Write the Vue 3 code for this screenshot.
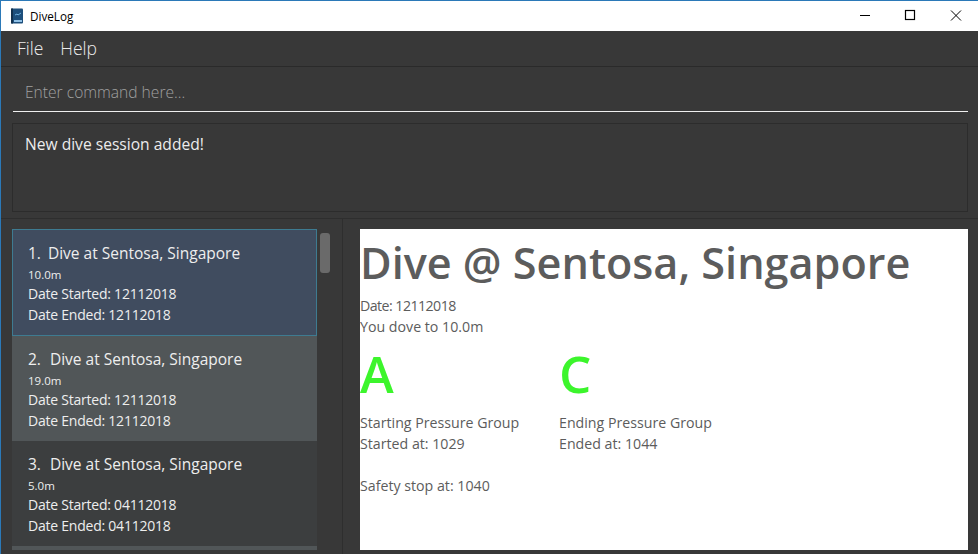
<template>
  <div class="window">
    <header class="titlebar">
      <svg class="app-icon" width="14" height="16" viewBox="0 0 14 16">
        <rect x="1" y="0.5" width="12" height="15" rx="1" fill="#1d4f7c" />
        <rect x="1" y="0.5" width="2" height="15" fill="#12304d" />
        <path d="M5 7l2-1 1 1 3-2" stroke="#6fb0e0" fill="none" />
        <rect x="4" y="12" width="8" height="2" fill="#8fc0e6" />
      </svg>
      <span class="app-title">DiveLog</span>
      <div class="win-controls">
        <svg width="46" height="30" viewBox="0 0 46 30"><path d="M20 14.5h10" stroke="#000" /></svg>
        <svg width="46" height="30" viewBox="0 0 46 30"><rect x="19.5" y="9.5" width="9" height="9" fill="none" stroke="#000" stroke-width="1.2" /></svg>
        <svg width="46" height="30" viewBox="0 0 46 30"><path d="M19 9.5l10 10M29 9.5l-10 10" stroke="#000" /></svg>
      </div>
    </header>

    <nav class="menubar">
      <span>File</span>
      <span>Help</span>
    </nav>

    <div class="command">
      <div class="command-input">Enter command here...</div>
    </div>

    <div class="result-wrap">
      <div class="result">New dive session added!</div>
    </div>

    <main class="split">
      <section class="list-pane">
        <div class="list">
          <article
            v-for="(dive, i) in dives"
            :key="i"
            class="card"
            :class="{ selected: i === 0, alt: i === 1 }"
          >
            <div class="card-title"><span class="card-num">{{ i + 1 }}.</span>Dive at {{ dive.place }}</div>
            <div class="card-depth">{{ dive.depth }}</div>
            <div class="card-line">Date Started: {{ dive.date }}</div>
            <div class="card-line">Date Ended: {{ dive.date }}</div>
          </article>
          <div class="card-next"></div>
        </div>
        <div class="scrollbar"><div class="thumb"></div></div>
      </section>

      <section class="detail-pane">
        <div class="detail">
          <h1>Dive @ Sentosa, Singapore</h1>
          <p class="date">Date: 12112018</p>
          <p>You dove to 10.0m</p>
          <div class="groups">
            <div class="group">
              <div class="letter">A</div>
              <p>Starting Pressure Group</p>
              <p>Started at: 1029</p>
            </div>
            <div class="group">
              <div class="letter">C</div>
              <p>Ending Pressure Group</p>
              <p>Ended at: 1044</p>
            </div>
          </div>
          <p class="safety">Safety stop at: 1040</p>
        </div>
      </section>
    </main>
  </div>
</template>

<script setup>
const dives = [
  { place: 'Sentosa, Singapore', depth: '10.0m', date: '12112018' },
  { place: 'Sentosa, Singapore', depth: '19.0m', date: '12112018' },
  { place: 'Sentosa, Singapore', depth: '5.0m', date: '04112018' }
];
</script>

<style>
html, body {
  margin: 0;
  overflow: hidden;
}
</style>

<style scoped>
.window {
  width: 978px;
  height: 554px;
  box-sizing: border-box;
  border-top: 1px solid #2b79b8;
  border-left: 1px solid #2b79b8;
  display: flex;
  flex-direction: column;
  background: #383838;
  font-family: "Open Sans", "Noto Sans", sans-serif;
  overflow: hidden;
}

.titlebar {
  height: 30px;
  flex: none;
  box-sizing: border-box;
  display: flex;
  align-items: center;
  padding-left: 9px;
  background: #fff;
}

.app-title {
  margin-left: 6px;
  margin-top: -1px;
  font-size: 11.7px;
  color: #000;
}

.win-controls {
  margin-left: auto;
  display: flex;
}

.win-controls svg {
  display: block;
}

.menubar {
  height: 36px;
  flex: none;
  box-sizing: border-box;
  display: flex;
  align-items: center;
  gap: 17px;
  padding: 0 0 2px 16px;
  font-size: 17.5px;
  font-weight: 300;
  color: #ececec;
  border-bottom: 1px solid #2a2a2a;
}

.command {
  height: 51px;
  flex: none;
  box-sizing: border-box;
  padding: 0 10px 0 12px;
}

.command-input {
  height: 45px;
  box-sizing: border-box;
  padding: 15px 0 0 12px;
  font-size: 15.6px;
  font-weight: 300;
  line-height: 20px;
  color: #a0a0a0;
  border-bottom: 1px solid #f0f0f0;
}

.result-wrap {
  height: 101px;
  flex: none;
  box-sizing: border-box;
  padding: 5px 10px 6px 11px;
  border-bottom: 1px solid #2e2e2e;
}

.result {
  height: 89px;
  box-sizing: border-box;
  padding: 10px 12px;
  border: 1px solid #2c2c2c;
  font-size: 15.6px;
  line-height: 20px;
  color: #ececec;
}

.split {
  flex: 1;
  min-height: 0;
  display: flex;
}

.list-pane {
  width: 342px;
  flex: none;
  box-sizing: border-box;
  display: flex;
  padding: 10px 0 0 11px;
  border-right: 1px solid #2e2e2e;
}

.list {
  width: 305px;
  flex: none;
}

.card {
  height: 105px;
  box-sizing: border-box;
  padding: 13px 16px 0;
  background: #3c3e3f;
  color: #eee;
  font-size: 14px;
  line-height: 20.5px;
  letter-spacing: -0.23px;
}

.card.selected {
  height: 107px;
  background: #404c5f;
  border: 1px solid #3e7b91;
  padding: 13px 15px 0;
}

.card.alt {
  background: #515658;
}

.card-next {
  height: 4px;
  background: #515658;
}

.card-title {
  font-size: 15.5px;
  line-height: 21px;
  letter-spacing: 0;
}

.card-num {
  margin-right: 9px;
}

.selected .card-num {
  margin-right: 7px;
}

.card-depth {
  font-size: 11.5px;
  line-height: 19px;
  margin-top: 1px;
  letter-spacing: 0;
}

.scrollbar {
  width: 10px;
  margin-left: 3px;
  padding-top: 4px;
}

.thumb {
  height: 40px;
  border-radius: 3px;
  background: #6a6a6a;
}

.detail-pane {
  flex: 1;
  min-width: 0;
  box-sizing: border-box;
  padding: 10px 10px 4px 17px;
}

.detail {
  height: 100%;
  box-sizing: border-box;
  background: #fff;
  color: #5c5c5c;
  font-size: 14.2px;
  line-height: 21px;
}

.detail p {
  margin: 0;
}

.detail h1 {
  margin: 0;
  padding-top: 6px;
  font-size: 43.2px;
  line-height: 55px;
  font-weight: 600;
  white-space: nowrap;
}

.detail .date {
  margin-top: 5px;
  letter-spacing: -0.55px;
}

.groups {
  display: flex;
  margin-top: 2px;
}

.group {
  width: 199px;
}

.letter {
  font-size: 51px;
  line-height: 68px;
  font-weight: 600;
  color: #3cf52c;
  margin-bottom: 5px;
}

.detail .safety {
  margin-top: 21px;
}
</style>
